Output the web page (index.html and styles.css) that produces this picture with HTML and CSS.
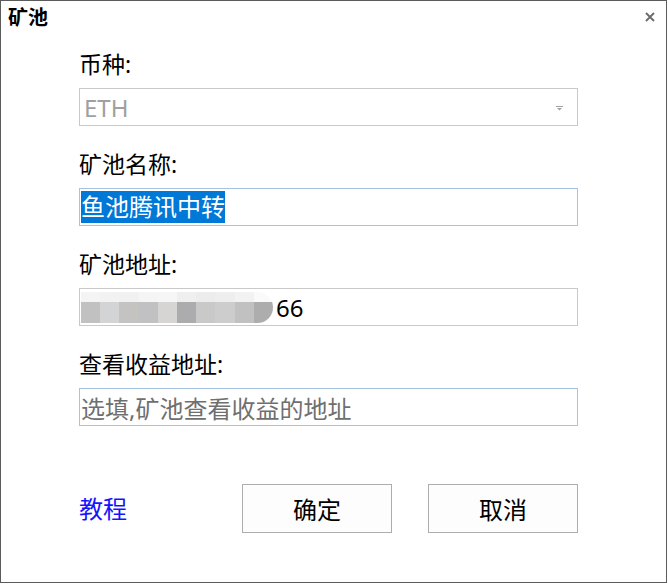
FILE: index.html
```
<!DOCTYPE html>
<html lang="zh-CN">
<head>
    <meta charset="UTF-8">
    <title>矿池</title>
    <link rel="stylesheet" href="styles.css">
</head>
<body>
<div class="window">
    <div class="titlebar">
        <span class="title">矿池</span>
        <span class="close">
            <svg width="10" height="10" viewBox="0 0 10 10"><path d="M1 1L9 9M9 1L1 9" stroke="#6a6a6a" stroke-width="1.8"/></svg>
        </span>
    </div>
    <div class="form">
        <div class="field">
            <div class="label">币种:</div>
            <div class="box select">
                <span class="disabled">ETH</span>
                <svg class="arrow" width="7" height="5" viewBox="0 0 7 5"><path d="M0 0.5H7" stroke="#a0a0a0" stroke-width="1"/><path d="M1 2H6L3.5 4.5Z" fill="#a0a0a0"/></svg>
            </div>
        </div>
        <div class="field">
            <div class="label">矿池名称:</div>
            <div class="box focus"><span class="selected">鱼池腾讯中转</span></div>
        </div>
        <div class="field">
            <div class="label">矿池地址:</div>
            <div class="box">
                <span class="mask">
                    <span class="row top">
                        <i style="background:#f4f4f4"></i><i style="background:#f2f2f3"></i><i style="background:#f1f1f1"></i><i style="background:#f5f5f5"></i><i style="background:#f6f6f6"></i><i style="background:#efefef"></i><i style="background:#ececec"></i><i style="background:#eeeeee"></i><i style="background:#f2f2f2"></i><i style="background:#fafafa"></i>
                    </span>
                    <span class="row bottom">
                        <i style="background:#c1c1c1"></i><i style="background:#d3d4d6"></i><i style="background:#c4c3c1"></i><i style="background:#c1c1c3"></i><i style="background:#d7d5d3"></i><i style="background:#acacae"></i><i style="background:#c9c9c9"></i><i style="background:#cdcdcd"></i><i style="background:#c1c1c1"></i><i style="background:#adadad"></i>
                    </span>
                </span><span class="value">66</span>
            </div>
        </div>
        <div class="field">
            <div class="label">查看收益地址:</div>
            <div class="box focus"><span class="placeholder">选填,矿池查看收益的地址</span></div>
        </div>
        <div class="footer">
            <a class="link" href="#">教程</a>
            <div class="buttons">
                <button type="button" class="button">确定</button>
                <button type="button" class="button">取消</button>
            </div>
        </div>
    </div>
</div>
</body>
</html>
```
FILE: styles.css
```
html {
    background: white;
}
body {
    margin: 0;
    font-family: "Noto Sans", "Noto Sans CJK SC", sans-serif;
    color: black;
}
.window {
    width: 667px;
    height: 583px;
    box-sizing: border-box;
    border: 1px solid #5b5b5b;
    background: white;
}
.titlebar {
    height: 34px;
    display: flex;
    align-items: center;
    justify-content: space-between;
    padding: 0 11px 0 7px;
}
.title {
    font-family: "Noto Sans CJK SC", sans-serif;
    font-size: 20px;
    font-weight: bold;
    line-height: 24px;
    margin-top: -3px;
}
.close {
    display: flex;
    margin-top: -3px;
}
.form {
    padding: 14px 0 0 78px;
    width: 499px;
}
.field {
    margin-bottom: 23px;
}
.label {
    font-size: 23px;
    line-height: 30px;
    margin-bottom: 9px;
}
.box {
    height: 38px;
    box-sizing: border-box;
    border: 1px solid #c9c9c9;
    display: flex;
    align-items: center;
    padding: 0 1px;
    font-size: 24px;
    white-space: nowrap;
    overflow: hidden;
}
.box.focus {
    border-color: #a8c3e0;
}
.select {
    justify-content: space-between;
    padding: 0 14px 0 4px;
}
.disabled {
    color: #a0a0a0;
}
.arrow {
    margin-top: 2px;
}
.selected {
    background: #0078d7;
    color: white;
    line-height: 32px;
    height: 32px;
    display: inline-block;
}
.placeholder {
    color: #6f6f6f;
}
.mask {
    display: inline-flex;
    flex-direction: column;
    width: 192px;
    height: 31px;
    margin-top: 1px;
    border-radius: 0 16px 16px 0;
    overflow: hidden;
}
.mask .row {
    display: flex;
}
.mask .row i {
    flex: 1;
}
.mask .top {
    height: 10px;
}
.mask .bottom {
    height: 21px;
}
.value {
    margin-left: 3px;
}
.footer {
    display: flex;
    justify-content: space-between;
    align-items: center;
    margin-top: 58px;
    width: 499px;
}
.link {
    font-family: "Noto Sans CJK SC", sans-serif;
    font-size: 24px;
    color: #1414ff;
    text-decoration: none;
    margin-top: -2px;
}
.buttons {
    display: flex;
    gap: 36px;
}
.button {
    width: 150px;
    height: 49px;
    border: 1px solid #adadad;
    background: #fdfdfd;
    font-family: "Noto Sans CJK SC", sans-serif;
    font-size: 24px;
    color: black;
    padding: 0;
}
```
